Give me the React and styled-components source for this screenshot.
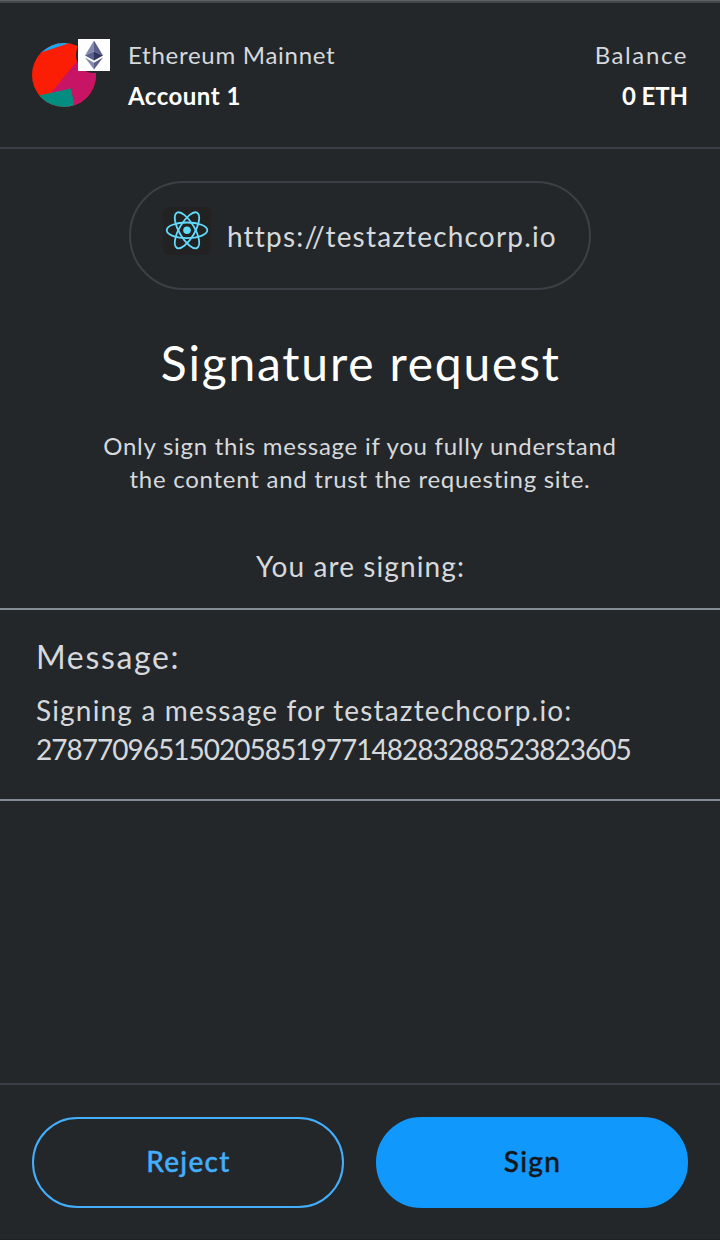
import React from "react";
import styled, { createGlobalStyle } from "styled-components";

const GlobalStyle = createGlobalStyle`
  * { box-sizing: border-box; }
  body {
    margin: 0;
    background: #24272a;
    color: #d6d9dc;
    font-family: Lato, "Open Sans", sans-serif;
  }
`;

const Popup = styled.div`
  display: flex;
  flex-direction: column;
  width: 720px;
  height: 1240px;
  background: #24272a;
  border-top: 1px solid #5d6165;
  box-shadow: inset 0 2px 0 #43474b, inset 0 -1px 0 #1e2023;
`;

const Header = styled.header`
  display: flex;
  align-items: center;
  height: 148px;
  padding: 2px 32px 0;
  border-bottom: 2px solid #3b4046;
`;

const Avatar = styled.div`
  position: relative;
  width: 64px;
  height: 64px;
  margin-right: 32px;

  > svg { display: block; }
`;

const NetworkBadge = styled.div`
  position: absolute;
  top: -6px;
  right: -16px;
  display: flex;
  width: 36px;
  height: 36px;
  align-items: center;
  justify-content: center;
  border-radius: 50%;
  background: #24272a;
`;

const HeaderColumn = styled.div`
  display: flex;
  flex-direction: column;
  text-align: ${(p) => p.$align || "left"};
  margin-left: ${(p) => (p.$align === "right" ? "auto" : "0")};
`;

const Caption = styled.span`
  font-size: 24px;
  line-height: 40px;
  letter-spacing: ${(p) => p.$tracking}px;
`;

const Strong = styled(Caption)`
  padding-top: 1px;
  margin-bottom: -1px;
  color: #fff;
  font-weight: 700;
`;

const Content = styled.main`
  display: flex;
  flex: 1;
  flex-direction: column;
  align-items: center;
  padding-top: 32px;
`;

const OriginPill = styled.div`
  display: flex;
  align-items: flex-start;
  gap: 16px;
  width: 462px;
  height: 109px;
  padding: 24px 30px 24px 32px;
  border: 2px solid #3b4046;
  border-radius: 55px;

  > svg { flex: none; }
`;

const Origin = styled.span`
  font-size: 28px;
  line-height: 58px;
  letter-spacing: 1.18px;
  white-space: nowrap;
`;

const Title = styled.h1`
  margin: 41px 0 34px;
  color: #fff;
  font-size: 48px;
  font-weight: 400;
  line-height: 64px;
  letter-spacing: 1.79px;
  text-indent: 1.5px;
`;

const Notice = styled.p`
  margin: 0;
  font-size: 24px;
  line-height: 33px;
  letter-spacing: 0.74px;
  text-align: center;
`;

const SigningLabel = styled.p`
  margin: 51px 0 22px;
  font-size: 28px;
  line-height: 40px;
  letter-spacing: 1.1px;
  text-indent: 1px;
`;

const MessagePanel = styled.section`
  align-self: stretch;
  height: 193px;
  padding: 23px 36px 0;
  border: solid #848c96;
  border-width: 2px 0;
`;

const MessageHeading = styled.h2`
  margin: 0 0 10px;
  font-size: 32px;
  font-weight: 400;
  line-height: 48px;
  letter-spacing: 1.65px;
`;

const MessageLine = styled.div`
  font-size: 28px;
  line-height: 39px;
  letter-spacing: ${(p) => (p.$numeric ? -0.99 : 1.17)}px;
  white-space: nowrap;
`;

const Footer = styled.footer`
  display: grid;
  grid-template-columns: 1fr 1fr;
  gap: 32px;
  height: 157px;
  padding: 32px 32px 0;
  border-top: 2px solid #3b4046;
`;

const Button = styled.button`
  height: 91px;
  padding: 0 0 3px;
  border: 2px solid ${(p) => (p.$primary ? "#1098fc" : "#43aefc")};
  border-radius: 46px;
  background: ${(p) => (p.$primary ? "#1098fc" : "transparent")};
  color: ${(p) => (p.$primary ? "#141618" : "#43aefc")};
  font: 500 28px/40px Lato, "Open Sans", sans-serif;
  letter-spacing: 1.3px;
  text-indent: 1px;
  -webkit-text-stroke: 0.4px currentColor;
`;

function Identicon() {
  return (
    <svg width="64" height="64" viewBox="0 0 64 64">
      <clipPath id="round"><circle cx="32" cy="32" r="32" /></clipPath>
      <g clipPath="url(#round)">
        <rect width="64" height="64" fill="#fb1e04" />
        <path d="M0 12.5 L42 -1.5 V-5 H0Z" fill="#18a8f2" />
        <path d="M18 51 L64 -5 V70 H40Z" fill="#c81465" />
        <path d="M0 54 L39 45.5 L44 70 H0Z" fill="#038c80" />
      </g>
    </svg>
  );
}

function EthereumMark() {
  return (
    <svg width="32" height="32" viewBox="0 0 32 32">
      <rect width="32" height="32" fill="#fff" />
      <path d="M16 1.5 L7 16.5 L16 12.5Z" fill="#8489ad" />
      <path d="M16 1.5 L25 16.5 L16 12.5Z" fill="#5a5f8b" />
      <path d="M7 16.5 L16 12.5 V21.5Z" fill="#5c618c" />
      <path d="M25 16.5 L16 12.5 V21.5Z" fill="#31365e" />
      <path d="M7 18.5 L16 23.7 V30.5Z" fill="#8489ad" />
      <path d="M25 18.5 L16 23.7 V30.5Z" fill="#5a5f8b" />
    </svg>
  );
}

function ReactMark() {
  return (
    <svg width="48" height="48" viewBox="0 0 48 48">
      <rect width="48" height="48" rx="6" fill="#222" />
      <g transform="translate(24 23.3)" fill="none" stroke="#61dafb" strokeWidth="1.8">
        <ellipse rx="20.3" ry="7.8" />
        <ellipse rx="20.3" ry="7.8" transform="rotate(60)" />
        <ellipse rx="20.3" ry="7.8" transform="rotate(120)" />
        <circle r="3.8" fill="#61dafb" stroke="none" />
      </g>
    </svg>
  );
}

export default function App() {
  return (
    <>
      <GlobalStyle />
      <Popup>
        <Header>
          <Avatar>
            <Identicon />
            <NetworkBadge><EthereumMark /></NetworkBadge>
          </Avatar>
          <HeaderColumn>
            <Caption $tracking={0.73}>Ethereum Mainnet</Caption>
            <Strong $tracking={0.5}>Account 1</Strong>
          </HeaderColumn>
          <HeaderColumn $align="right">
            <Caption $tracking={1.6}>Balance</Caption>
            <Strong $tracking={-0.1}>0 ETH</Strong>
          </HeaderColumn>
        </Header>
        <Content>
          <OriginPill>
            <ReactMark />
            <Origin>https://testaztechcorp.io</Origin>
          </OriginPill>
          <Title>Signature request</Title>
          <Notice>
            Only sign this message if you fully understand
            <br />
            the content and trust the requesting site.
          </Notice>
          <SigningLabel>You are signing:</SigningLabel>
          <MessagePanel>
            <MessageHeading>Message:</MessageHeading>
            <MessageLine>Signing a message for testaztechcorp.io:</MessageLine>
            <MessageLine $numeric>278770965150205851977148283288523823605</MessageLine>
          </MessagePanel>
        </Content>
        <Footer>
          <Button>Reject</Button>
          <Button $primary>Sign</Button>
        </Footer>
      </Popup>
    </>
  );
}
